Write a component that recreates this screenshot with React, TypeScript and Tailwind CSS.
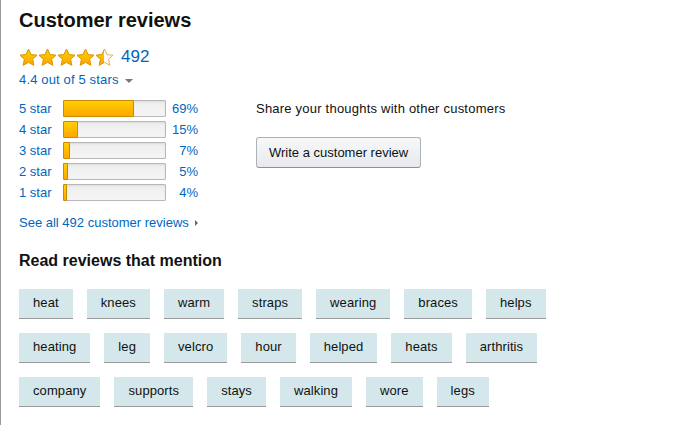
import React from 'react';

const histogram = [
  { label: '5 star', pct: 69 },
  { label: '4 star', pct: 15 },
  { label: '3 star', pct: 7 },
  { label: '2 star', pct: 5 },
  { label: '1 star', pct: 4 },
];

const mentions = [
  'heat', 'knees', 'warm', 'straps', 'wearing', 'braces', 'helps',
  'heating', 'leg', 'velcro', 'hour', 'helped', 'heats', 'arthritis',
  'company', 'supports', 'stays', 'walking', 'wore', 'legs',
];

const STAR = 'M10 1.2l2.65 5.75 6.25.7-4.65 4.3 1.3 6.2L10 15l-5.55 3.15 1.3-6.2L1.1 7.65l6.25-.7z';

function Star({ fill, id }: { fill: number; id: string }) {
  return (
    <svg width="19" height="19" viewBox="0 0 20 20" className="block">
      <defs>
        <linearGradient id={`g-${id}`} x1="0" y1="0" x2="0" y2="1">
          <stop offset="0" stopColor="#ffd400" />
          <stop offset="1" stopColor="#f7a600" />
        </linearGradient>
        <clipPath id={`c-${id}`}>
          <rect x="0" y="0" width={20 * fill} height="20" />
        </clipPath>
      </defs>
      <path d={STAR} fill="#fff" stroke="#e0a030" strokeWidth="0.9" strokeLinejoin="round" />
      <path d={STAR} fill={`url(#g-${id})`} stroke="#d99400" strokeWidth="0.9" strokeLinejoin="round" clipPath={`url(#c-${id})`} />
    </svg>
  );
}

export default function App() {
  return (
    <div className="min-h-[425px] w-[684px] border-l border-[#9a9a9a] bg-white pl-[18px] pt-[8px] text-[13px] text-[#111] font-['Liberation_Sans',Arial,sans-serif]">
      <h2 className="text-[20px] font-bold leading-[24px]">Customer reviews</h2>

      <div className="mt-[14px] flex items-center h-[22px]">
        <div className="flex">
          {[1, 1, 1, 1, 0.48].map((f, i) => (
            <Star key={i} fill={f} id={`s${i}`} />
          ))}
        </div>
        <span className="ml-[7px] text-[17px] leading-[22px] text-[#0066c0]">492</span>
      </div>
      <div className="mt-[4px] flex items-center leading-[16px] tracking-[0.15px] text-[#0066c0]">
        4.4 out of 5 stars
        <span className="ml-[6px] mt-[1px] h-0 w-0 border-x-[4px] border-t-[4px] border-x-transparent border-t-[#777]" />
      </div>

      <div className="mt-[12px] flex">
        <div className="flex w-[237px] shrink-0 flex-col gap-[4px]">
          {histogram.map((row) => (
            <div key={row.label} className="flex h-[17px] items-center text-[#0066c0]">
              <span className="w-[44px]">{row.label}</span>
              <div className="h-[17px] w-[103px] rounded-[1px] border border-[#b8b8b8] bg-gradient-to-b from-[#eeeeee] to-[#f5f5f5] shadow-[inset_0_1px_2px_rgba(0,0,0,0.08)]">
                <div
                  className="-m-px h-[17px] rounded-[1px] border border-[#c98a00] bg-gradient-to-b from-[#ffce00] to-[#ffa700]"
                  style={{ width: `${Math.max(Math.round(row.pct * 1.03), 4)}px` }}
                />
              </div>
              <span className="w-[32px] text-right">{row.pct}%</span>
            </div>
          ))}
          <div className="mt-[8px] flex items-center text-[#0066c0]">
            See all 492 customer reviews
            <span className="ml-[6px] h-0 w-0 border-y-[3px] border-l-[3px] border-y-transparent border-l-[#666]" />
          </div>
        </div>

        <div className="flex flex-col items-start">
          <p className="leading-[17px] tracking-[0.22px]">Share your thoughts with other customers</p>
          <button className="mt-[20px] h-[31px] rounded-[3px] border border-[#adb1b8] border-b-[#8d9096] bg-gradient-to-b from-[#f7f8fa] to-[#e7e9ec] px-[12px] text-[13px] text-[#111]">
            Write a customer review
          </button>
        </div>
      </div>

      <h3 className="mt-[18px] text-[16px] font-bold leading-[20px]">Read reviews that mention</h3>

      <div className="mt-[18px] flex w-[580px] flex-wrap gap-x-[14px] gap-y-[14px] tracking-[0.1px]">
        {mentions.map((m) => (
          <span
            key={m}
            className="flex h-[30px] items-center border-b border-[#9a9a9a] bg-[#d4e8eb] px-[14px] text-[#111]"
          >
            {m}
          </span>
        ))}
      </div>
    </div>
  );
}
